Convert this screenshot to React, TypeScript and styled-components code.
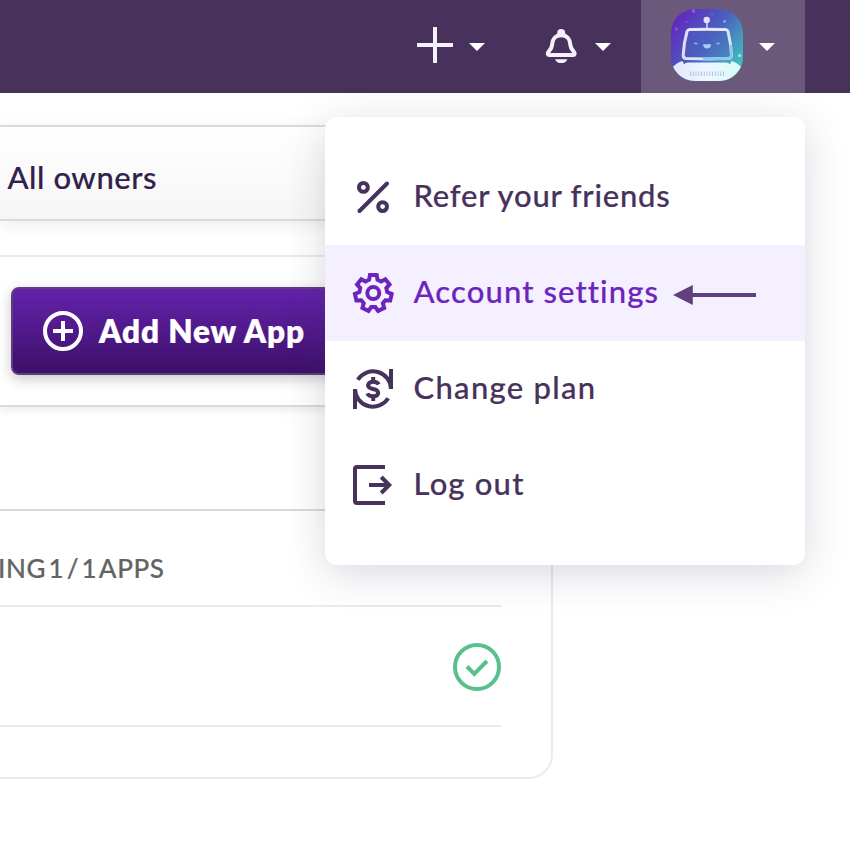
import React from "react";
import styled, { createGlobalStyle } from "styled-components";

const Global = createGlobalStyle`
  *, *::before, *::after { box-sizing: border-box; }
  body { margin: 0; background: #fff; overflow: hidden; }
  svg { display: block; flex: none; }
`;

const Page = styled.div`
  position: relative;
  width: 850px;
  height: 850px;
  overflow: hidden;
  background: #fff;
  font-family: Lato, "Liberation Sans", sans-serif;
`;

const TopBar = styled.header`
  display: flex;
  justify-content: flex-end;
  height: 93px;
  padding-right: 45px;
  background: #47325b;
`;

const TopBarItem = styled.div<{ $width: number; $active?: boolean }>`
  display: flex;
  align-items: center;
  justify-content: flex-end;
  width: ${(p) => p.$width}px;
  padding: 0 30px 3px 0;
  gap: 16px;
  background: ${(p) => (p.$active ? "#6a597b" : "transparent")};
`;

const Caret = styled.span`
  width: 0;
  height: 0;
  margin-top: 4px;
  border: 8px solid transparent;
  border-top-color: #fff;
  border-bottom-width: 0;
`;

const Filters = styled.section`
  width: 700px;
  padding-top: 32px;
`;

const OwnerSelect = styled.div`
  display: flex;
  align-items: center;
  height: 96px;
  padding: 8px 0 0 7.5px;
  border: solid #dadada;
  border-width: 2px 0;
  background: linear-gradient(#fff, #f6f6f6);
  box-shadow: 0 4px 16px rgba(0, 0, 0, 0.07);
`;

const Toolbar = styled.section`
  display: flex;
  align-items: center;
  width: 700px;
  height: 152px;
  margin-top: 34px;
  padding-left: 11px;
  border: solid #ebebeb;
  border-width: 2px 0;
  border-bottom-color: #dadada;
  box-shadow: 0 4px 8px rgba(0, 0, 0, 0.07);
`;

const AddButton = styled.button`
  display: flex;
  align-items: center;
  gap: 16px;
  width: 400px;
  height: 88px;
  padding: 0 0 0 30px;
  border: 2px solid #5f3c7c;
  border-radius: 8px;
  background: linear-gradient(#6322ab, #3d1069);
  box-shadow: 0 4px 14px rgba(0, 0, 0, 0.22);
  font-family: inherit;
`;

const Label = styled.span<{
  $size: number;
  $color: string;
  $weight?: number;
  $spacing?: number;
  $wordSpacing?: number;
}>`
  font-size: ${(p) => p.$size}px;
  line-height: 40px;
  font-weight: ${(p) => p.$weight ?? 500};
  letter-spacing: ${(p) => p.$spacing ?? 0}px;
  word-spacing: ${(p) => p.$wordSpacing ?? 0}px;
  color: ${(p) => p.$color};
  white-space: nowrap;
  -webkit-text-stroke: 0.2px currentColor;
`;

const AppsCard = styled.section`
  width: 553px;
  height: 270px;
  margin-top: 102px;
  padding-right: 50px;
  border: 2px solid #ebebeb;
  border-top-color: #dadada;
  border-left: 0;
  border-radius: 0 0 24px 0;
`;

const CardHeading = styled.div`
  display: flex;
  align-items: center;
  height: 96px;
  margin-left: -2px;
  padding-top: 19px;
  border-bottom: 2px solid #ebebeb;
`;

const AppRow = styled.div`
  display: flex;
  align-items: center;
  justify-content: flex-end;
  height: 120px;
  padding-top: 2px;
  border-bottom: 2px solid #ebebeb;
`;

const Menu = styled.nav`
  position: absolute;
  top: 117px;
  left: 325px;
  width: 480px;
  height: 448px;
  padding: 32px 0;
  border-radius: 12px;
  background: #fff;
  box-shadow: 0 8px 40px rgba(71, 50, 91, 0.2);
`;

const MenuItem = styled.div<{ $active?: boolean }>`
  display: flex;
  align-items: center;
  height: 96px;
  padding: 0 28px;
  color: ${(p) => (p.$active ? "#6c24bd" : "#47325b")};
  background: ${(p) => (p.$active ? "#f5f0ff" : "transparent")};
`;

const MenuText = styled(Label)`
  margin-left: 20.5px;
  padding-bottom: 5px;
`;

const PlusIcon = () => (
  <svg width="36" height="36" viewBox="0 0 36 36">
    <path d="M18 0v36M0 18h36" stroke="#f6f0ff" strokeWidth="4" />
  </svg>
);

const BellIcon = () => (
  <svg width="36" height="38" viewBox="0 -1 36 38" fill="none">
    <path
      d="M18.2 8.2C12 8.2 9.4 12.7 9.2 17c-.2 4.200-1.300 5.300-3.600 7.600-1.700 1.700-1 3.400.8 3.400h23.600c1.800 0 2.500-1.700.8-3.400-2.300-2.300-3.400-3.400-3.600-7.600-.2-4.300-2.800-8.800-9-8.800z"
      stroke="#f6f0ff"
      strokeWidth="4"
    />
    <path d="M14.200 8V6a4 4 0 0 1 8 0v2zM12 32.200h12.400c-1 2.500-3.400 3.900-6.200 3.900s-5.200-1.400-6.200-3.900z" fill="#f6f0ff" />
  </svg>
);

const Avatar = () => (
  <svg width="72" height="72" viewBox="0 0 72 72" fill="none">
    <defs>
      <linearGradient id="sky" x1="4" y1="10" x2="70" y2="58" gradientUnits="userSpaceOnUse">
        <stop offset="0" stopColor="#6129bd" />
        <stop offset="0.5" stopColor="#4a62bf" />
        <stop offset="1" stopColor="#43c5bd" />
      </linearGradient>
      <linearGradient id="suit" x1="0" y1="60" x2="72" y2="60" gradientUnits="userSpaceOnUse">
        <stop offset="0" stopColor="#dfe8fb" />
        <stop offset="0.5" stopColor="#eef6ff" />
        <stop offset="1" stopColor="#d6fbf7" />
      </linearGradient>
      <clipPath id="tile">
        <rect width="72" height="72" rx="24" />
      </clipPath>
    </defs>
    <g clipPath="url(#tile)">
      <rect width="72" height="72" fill="url(#sky)" />
      <g fill="#7d62d0">
        <circle cx="22.500" cy="2" r="1.900" />
        <circle cx="5.500" cy="20" r="1.500" />
        <circle cx="15.500" cy="13" r="0.900" />
        <circle cx="41" cy="5" r="1" />
        <circle cx="53.500" cy="12.500" r="1.300" fill="#8db5ee" />
        <circle cx="68.500" cy="46.500" r="1.500" fill="#8ceef2" />
      </g>
      <path d="M36 12v9" stroke="#c8c8f0" strokeWidth="1.800" />
      <circle cx="35.700" cy="11" r="3.200" fill="#e4e1fa" />
      <path
        d="M18.500 20.500Q36 19.800 54.500 20.500Q56.500 20.700 57 22.500Q60 35 60.500 46Q60.500 49.200 57.500 49.500Q36 50.300 15 49.500Q12 49.200 12.200 46Q12.800 34 16 22.500Q16.700 20.700 18.500 20.500z"
        fill="#4866bd"
        fillOpacity="0.400"
        stroke="#dedff7"
        strokeWidth="3"
      />
      <path d="M32 49.900Q46 50 57.500 49.500Q60.500 49.200 60.500 46Q60.400 42 59.500 36" stroke="#89c8f2" strokeWidth="2.600" />
      <path d="M16.500 21Q36 20 56 21" stroke="#f0eefc" strokeWidth="1.500" />
      <path d="M32 35.200h8.200q-.4 4.200-4.100 4.200T32 35.200z" fill="#a9cdf5" />
      <path d="M23.200 35q1.600-1.300 3.200 0M45.500 35q1.600-1.300 3.200 0" stroke="#9ab4ea" strokeWidth="1.500" />
      <path d="M0 60Q6 53 11.500 52l1.700 3.500Q14 53.500 17 53.500h38q3 0 4 2l1.500-3.500Q66 53 72 60v12H0z" fill="url(#suit)" />
      <path d="M19 64.800h34" stroke="#aac6e4" strokeWidth="4.500" strokeDasharray="1 1.750" />
    </g>
  </svg>
);

const CirclePlusIcon = () => (
  <svg width="40" height="40" viewBox="0 0 40 40" fill="none" stroke="#fff" strokeWidth="4">
    <circle cx="20" cy="20" r="18" />
    <path d="M20 10v20M10 20h20" />
  </svg>
);

const CheckIcon = () => (
  <svg width="48" height="48" viewBox="0 0 48 48" fill="none" stroke="#58c08c" strokeWidth="4">
    <circle cx="24" cy="24" r="22" />
    <path d="M14 23.500l7.300 7.300L34 18" />
  </svg>
);

const PercentIcon = () => (
  <svg width="40" height="40" viewBox="0 0 40 40" fill="none" stroke="currentColor" strokeWidth="4">
    <circle cx="10.400" cy="10.400" r="4.400" />
    <circle cx="29.600" cy="29.600" r="4.400" />
    <path d="M6.500 34L34 6.500" strokeLinecap="round" />
  </svg>
);

const polar = (radius: number, degrees: number) => {
  const a = (degrees * Math.PI) / 180;
  return `${(20.3 + radius * Math.sin(a)).toFixed(2)} ${(20.1 - radius * Math.cos(a)).toFixed(2)}`;
};

const gearPoints = Array.from({ length: 7 }, (_, i) => (i * 360) / 7).flatMap((a) => [
  polar(14, a - 17.5),
  polar(18.4, a - 10.5),
  polar(18.4, a + 10.5),
  polar(14, a + 17.5),
]);

const GearIcon = () => (
  <svg width="40" height="40" viewBox="0 0 40 40" overflow="visible" fill="none" stroke="currentColor" strokeWidth="4">
    <path d={`M${gearPoints.join("L")}Z`} />
    <circle cx="20.300" cy="20.100" r="6" />
  </svg>
);

const PlanIcon = () => (
  <svg width="40" height="40" viewBox="0 0 40 40" fill="none" stroke="currentColor" strokeWidth="4">
    <path d="M4.800 10.700A18 18 0 0 1 38 20V0M35.200 29.300A18 18 0 0 1 2 20v20" strokeLinejoin="bevel" />
    <path d="M25.600 15.600Q24.500 12.800 20.200 12.800T15 16.300Q15 19 20 20T25.200 23.800Q25 27.200 20.200 27.200T14.400 24.300" />
    <path d="M20.200 8v5M20.200 27v5" />
  </svg>
);

const LogoutIcon = () => (
  <svg width="40" height="40" viewBox="0 0 40 40" fill="none" stroke="currentColor" strokeWidth="4">
    <path d="M32 2H4a2 2 0 0 0-2 2v32a2 2 0 0 0 2 2h28M16 20h20M28.200 12l8 8-8 8" />
  </svg>
);

const PointerArrow = () => (
  <svg width="83" height="20" viewBox="0 0 83 20">
    <path d="M0 10L19.800 0v8H83v4H19.800v8z" fill="#62407f" />
  </svg>
);

const ArrowSlot = styled.span`
  margin: 4px 21px 0 auto;
`;

const menuItems = [
  { label: "Refer your friends", Icon: PercentIcon, spacing: 0.78 },
  { label: "Account settings", Icon: GearIcon, spacing: 1.12, active: true },
  { label: "Change plan", Icon: PlanIcon, spacing: 1.3 },
  { label: "Log out", Icon: LogoutIcon, spacing: 1.2 },
];

export default function App() {
  return (
    <>
      <Global />
      <Page>
        <TopBar>
          <TopBarItem $width={126}>
            <PlusIcon />
            <Caret />
          </TopBarItem>
          <TopBarItem $width={126}>
            <BellIcon />
            <Caret />
          </TopBarItem>
          <TopBarItem $width={164} $active>
            <Avatar />
            <Caret />
          </TopBarItem>
        </TopBar>
        <Filters>
          <OwnerSelect>
            <Label $size={31} $color="#331f4b" $spacing={0.55}>All owners</Label>
          </OwnerSelect>
        </Filters>
        <Toolbar>
          <AddButton>
            <CirclePlusIcon />
            <Label $size={31.5} $color="#fff" $weight={800} $spacing={0.9}>Add New App</Label>
          </AddButton>
        </Toolbar>
        <AppsCard>
          <CardHeading>
            <Label $size={26} $color="#636363" $spacing={0.6} $wordSpacing={-4.7}>ING 1 / 1 APPS</Label>
          </CardHeading>
          <AppRow>
            <CheckIcon />
          </AppRow>
        </AppsCard>
        <Menu>
          {menuItems.map(({ label, Icon, active, spacing }) => (
            <MenuItem key={label} $active={active}>
              <Icon />
              <MenuText $size={31} $color="inherit" $spacing={spacing}>{label}</MenuText>
              {active && (
                <ArrowSlot>
                  <PointerArrow />
                </ArrowSlot>
              )}
            </MenuItem>
          ))}
        </Menu>
      </Page>
    </>
  );
}
